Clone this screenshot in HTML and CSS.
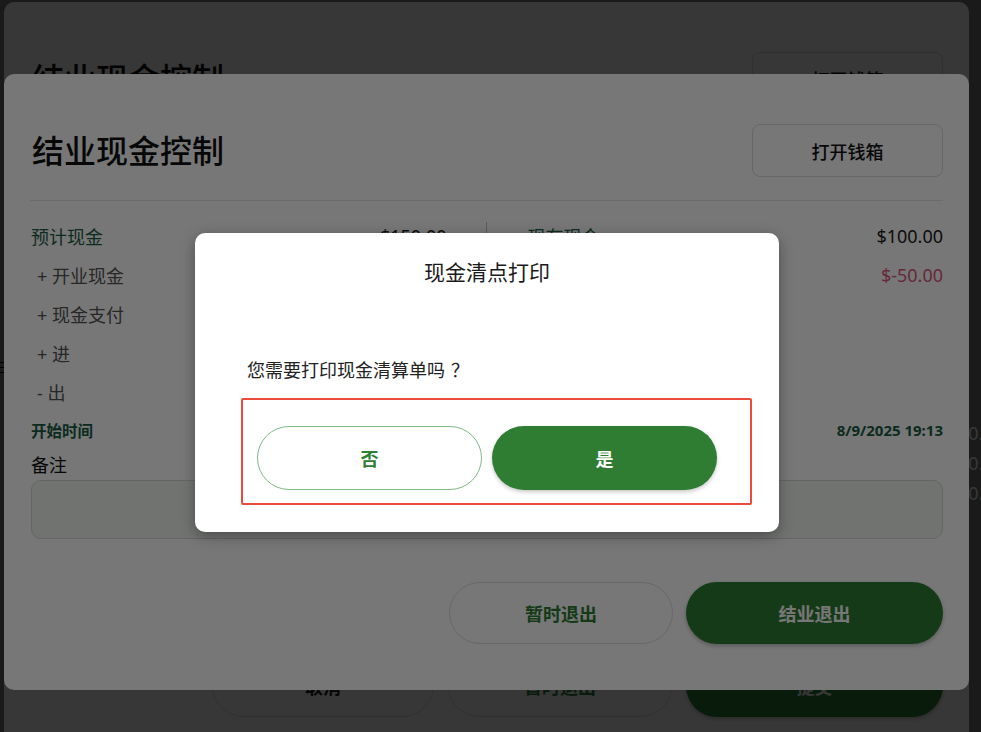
FILE: index.html
```html
<!DOCTYPE html>
<html lang="zh-CN">
<head>
<meta charset="utf-8">
<title>结业现金控制</title>
<link rel="stylesheet" href="styles.css">
</head>
<body>
  <div class="page">
    <div class="page-marks"><span></span><span></span><span></span></div>
    <div class="page-amounts">
      <div>$10.00</div>
      <div>$20.00</div>
      <div>$30.00</div>
    </div>
  </div>

  <section class="dialog dialog-back">
    <header class="dlg-head">
      <h1 class="dlg-title">结业现金控制</h1>
      <button class="btn-drawer">打开钱箱</button>
    </header>
    <footer class="dlg-foot back-foot">
      <button class="pill pill-outline pill-cancel">取消</button>
      <button class="pill pill-outline pill-temp">暂时退出</button>
      <button class="pill pill-solid">提交</button>
    </footer>
  </section>

  <div class="scrim"></div>

  <section class="dialog dialog-front">
    <header class="dlg-head">
      <h1 class="dlg-title">结业现金控制</h1>
      <button class="btn-drawer">打开钱箱</button>
    </header>
    <div class="rule"></div>
    <div class="summary">
      <div class="col">
        <div class="row"><span class="label primary">预计现金</span><span class="amount">$150.00</span></div>
        <div class="row sub"><span class="label">+ 开业现金</span><span class="amount">$100.00</span></div>
        <div class="row sub"><span class="label">+ 现金支付</span><span class="amount">$50.00</span></div>
        <div class="row sub"><span class="label">+ 进</span><span class="amount">$0.00</span></div>
        <div class="row sub"><span class="label">- 出</span><span class="amount">$0.00</span></div>
      </div>
      <div class="vdiv"></div>
      <div class="col">
        <div class="row"><span class="label primary">现有现金</span><span class="amount">$100.00</span></div>
        <div class="row"><span class="label primary">差额</span><span class="amount neg">$-50.00</span></div>
      </div>
    </div>
    <div class="meta"><span class="meta-label">开始时间</span><span class="meta-value">8/9/2025 19:13</span></div>
    <div class="note-label">备注</div>
    <div class="note"></div>
    <footer class="dlg-foot">
      <button class="pill pill-outline pill-temp">暂时退出</button>
      <button class="pill pill-solid">结业退出</button>
    </footer>
  </section>

  <div class="scrim"></div>

  <div class="modal" role="dialog">
    <h2 class="modal-title">现金清点打印</h2>
    <p class="modal-msg">您需要打印现金清算单吗<span class="qmark">？</span></p>
    <div class="modal-actions">
      <button class="choice choice-no">否</button>
      <button class="choice choice-yes">是</button>
    </div>
  </div>
</body>
</html>
```
FILE: styles.css
```css
html, body {
  margin: 0;
  padding: 0;
}

body {
  width: 981px;
  height: 732px;
  overflow: hidden;
  position: relative;
  background: #787878;
  font-family: "Noto Sans", "Noto Sans CJK SC", sans-serif;
  color: #111;
}

button {
  font-family: inherit;
  cursor: pointer;
}

/* underlying page (mostly hidden) */
.page {
  display: flex;
  justify-content: space-between;
  height: 100%;
}

.page-marks {
  margin-top: 362px;
  width: 4px;
}

.page-marks span {
  display: block;
  height: 1px;
  background: #000;
  margin-bottom: 4px;
}

.page-amounts {
  margin-top: 418px;
  margin-right: -23px;
  font-size: 18px;
  line-height: 30px;
  color: #fff;
  text-align: right;
  white-space: nowrap;
}

.scrim {
  position: absolute;
  inset: 0;
  background: rgba(0, 0, 0, 0.533);
}

/* dialogs */
.dialog {
  position: absolute;
  left: 4px;
  width: 965px;
  box-sizing: border-box;
  background: #fff;
  border-radius: 10px;
  display: flex;
  flex-direction: column;
  padding: 50px 26px 46px 27px;
}

.dialog-back {
  top: 2px;
  height: 761px;
}

.dialog-front {
  top: 74px;
  height: 616px;
}

.dlg-head {
  display: flex;
  justify-content: space-between;
  align-items: center;
  padding-left: 1px;
}

.dlg-title {
  margin: 0;
  font-size: 32px;
  font-weight: 500;
  line-height: 40px;
  color: #111;
}

.btn-drawer {
  width: 191px;
  height: 53px;
  background: #fff;
  border: 1px solid #dcdcdc;
  border-radius: 8px;
  font-size: 18px;
  font-weight: 500;
  color: #111;
}

.rule {
  height: 1px;
  background: #e6e6e6;
  margin-top: 23px;
  margin-left: -1px;
}

.summary {
  display: flex;
  margin-top: 15px;
}

.col {
  flex: 1;
  display: flex;
  flex-direction: column;
}

.vdiv {
  width: 1px;
  background: #c2c2c2;
  margin: 6px 41px 6px 39px;
}

.row {
  display: flex;
  justify-content: space-between;
  align-items: center;
  height: 39px;
  font-size: 18px;
}

.label {
  color: #444;
}

.label.primary {
  color: #1d5e46;
}

.row.sub .label {
  padding-left: 6px;
  color: #555;
}

.amount {
  color: #1a1a1a;
}

.amount.neg {
  color: #d9587c;
}

.meta {
  display: flex;
  justify-content: space-between;
  align-items: center;
  height: 38px;
  font-weight: 700;
  color: #1a5c45;
}

.meta-label {
  font-size: 15.5px;
}

.meta-value {
  font-size: 15px;
}

.note-label {
  margin-top: 3px;
  font-size: 18px;
  line-height: 26px;
  color: #111;
}

.note {
  margin-top: 2px;
  height: 59px;
  box-sizing: border-box;
  border: 1px solid #d9d9d9;
  border-radius: 10px;
  background: #f2f6f2;
}

.dlg-foot {
  margin-top: auto;
  display: flex;
  justify-content: flex-end;
  gap: 13px;
}

.back-foot {
  gap: 14px;
}

.pill {
  height: 62px;
  border-radius: 31px;
  font-size: 18px;
  font-weight: 700;
}

.pill-outline {
  width: 224px;
  background: #fff;
  border: 1px solid #dedede;
  color: #2e7d32;
}

.pill-cancel {
  width: 222px;
  color: #1a1a1a;
}

.pill-solid {
  width: 257px;
  background: #2e7d32;
  border: none;
  color: #fff;
  box-shadow: 0 2px 4px rgba(0, 0, 0, 0.25);
}

/* print confirmation modal */
.modal {
  position: absolute;
  left: 195px;
  top: 233px;
  width: 584px;
  height: 299px;
  box-sizing: border-box;
  padding-top: 25px;
  background: #fff;
  border-radius: 10px;
  box-shadow: 0 4px 14px rgba(0, 0, 0, 0.35);
}

.modal-title {
  margin: 0;
  text-align: center;
  font-size: 21px;
  font-weight: 400;
  line-height: 28px;
  color: #1a1a1a;
}

.modal-msg {
  margin: 71px 0 0;
  padding-left: 52px;
  font-family: "Noto Sans CJK SC", sans-serif;
  font-size: 18px;
  line-height: 24px;
  color: #222;
}

.qmark {
  padding-left: 6px;
}

.modal-actions {
  margin: 17px 27px 0 46px;
  border: 2px solid #ec4b3c;
  border-radius: 2px;
  padding: 26px 33px 13px 14px;
  display: flex;
  gap: 10px;
}

.choice {
  width: 225px;
  height: 64px;
  border-radius: 32px;
  font-size: 18px;
  font-weight: 700;
}

.choice-no {
  background: #fff;
  border: 1px solid #82b985;
  color: #2e7d32;
}

.choice-yes {
  background: #2e7d32;
  border: none;
  color: #fff;
  box-shadow: 0 2px 4px rgba(0, 0, 0, 0.22);
}
```
